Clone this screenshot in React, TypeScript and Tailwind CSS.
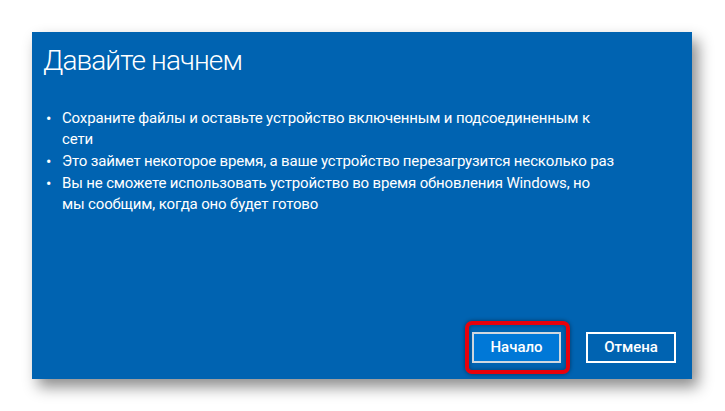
export default function App() {
  const items = [
    ['Сохраните файлы и оставьте устройство включенным и подсоединенным к', 'сети'],
    ['Это займет некоторое время, а ваше устройство перезагрузится несколько раз'],
    ['Вы не сможете использовать устройство во время обновления Windows, но', 'мы сообщим, когда оно будет готово'],
  ]

  return (
    <div
      className="h-[411px] w-[725px] bg-white pl-[32px] pt-[32px]"
      style={{ fontFamily: 'Roboto, "Noto Sans", sans-serif' }}
    >
      <div className="flex h-[347px] w-[660px] flex-col bg-[#0063b1] text-white shadow-[6px_8px_14px_rgba(0,0,0,0.45)]">
        <h1 className="ml-[11px] mt-[11px] text-[28px] font-light leading-[36px] tracking-[-0.9px]">Давайте начнем</h1>

        <ul className="mt-[29px] flex flex-col gap-[1px] text-[15px] leading-[21px] tracking-[-0.15px]">
          {items.map((lines, i) => (
            <li key={i} className="flex">
              <span className="w-[30px] pl-[14px] text-[16px]">•</span>
              <span className="whitespace-nowrap">
                {lines.map((line, j) => (
                  <div key={j}>{line}</div>
                ))}
              </span>
            </li>
          ))}
        </ul>

        <div className="mt-auto mb-[16px] mr-[16px] flex items-center justify-end gap-[25px]">
          <div className="relative">
            <button className="h-[31px] w-[89px] border-2 border-[#d0d8e0] bg-[#0078d7] text-[15px] font-medium text-white">
              Начало
            </button>
            <div className="pointer-events-none absolute -bottom-[11px] -left-[7px] -right-[9px] -top-[11px] rounded-[7px] border-[4px] border-[#e8000b] shadow-[0_0_4px_rgba(0,0,0,0.45),inset_0_0_4px_rgba(0,0,0,0.35)]" />
          </div>
          <button className="h-[31px] w-[90px] border-2 border-white text-[15px] font-medium text-white">
            Отмена
          </button>
        </div>
      </div>
    </div>
  )
}
